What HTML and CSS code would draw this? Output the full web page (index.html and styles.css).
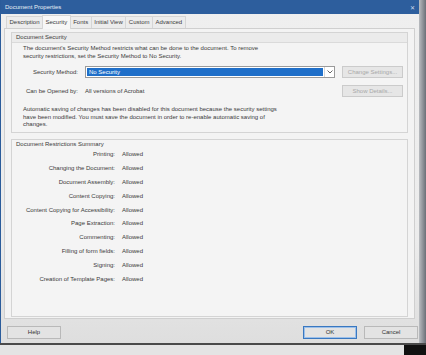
FILE: index.html
```html
<!DOCTYPE html>
<html lang="en">
<head>
    <meta charset="UTF-8">
    <title>Document Properties</title>
    <link rel="stylesheet" href="styles.css">
</head>
<body>
    <div class="screen">
        <div class="window">
            <div class="titlebar">
                <span>Document Properties</span>
                <span class="close">&#x2715;</span>
            </div>

            <div class="tabs">
                <div class="tab">Description</div>
                <div class="tab active">Security</div>
                <div class="tab">Fonts</div>
                <div class="tab">Initial View</div>
                <div class="tab">Custom</div>
                <div class="tab">Advanced</div>
            </div>

            <div class="panel">
                <div class="group security">
                    <div class="group-title">Document Security</div>
                    <p class="text">The document's Security Method restricts what can be done to the document. To remove<br>security restrictions, set the Security Method to No Security.</p>

                    <div class="field-row method-row">
                        <div class="field-label">Security Method:</div>
                        <div class="select">
                            <div class="select-value">No Security</div>
                            <div class="select-arrow">
                                <svg width="6" height="4" viewBox="0 0 6 4"><path d="M0.5 0.5 L3 3 L5.5 0.5" fill="none" stroke="#555" stroke-width="0.9"/></svg>
                            </div>
                        </div>
                        <div class="btn disabled">Change Settings...</div>
                    </div>

                    <div class="field-row opened-row">
                        <div class="field-label">Can be Opened by:</div>
                        <div class="field-value">All versions of Acrobat</div>
                        <div class="btn disabled">Show Details...</div>
                    </div>

                    <p class="text note">Automatic saving of changes has been disabled for this document because the security settings<br>have been modified. You must save the document in order to re-enable automatic saving of<br>changes.</p>
                </div>

                <div class="group summary">
                    <div class="group-title">Document Restrictions Summary</div>
                    <div class="rows">
                        <div class="row"><span class="key">Printing:</span><span>Allowed</span></div>
                        <div class="row"><span class="key">Changing the Document:</span><span>Allowed</span></div>
                        <div class="row"><span class="key">Document Assembly:</span><span>Allowed</span></div>
                        <div class="row"><span class="key">Content Copying:</span><span>Allowed</span></div>
                        <div class="row"><span class="key">Content Copying for Accessibility:</span><span>Allowed</span></div>
                        <div class="row"><span class="key">Page Extraction:</span><span>Allowed</span></div>
                        <div class="row"><span class="key">Commenting:</span><span>Allowed</span></div>
                        <div class="row"><span class="key">Filling of form fields:</span><span>Allowed</span></div>
                        <div class="row"><span class="key">Signing:</span><span>Allowed</span></div>
                        <div class="row"><span class="key">Creation of Template Pages:</span><span>Allowed</span></div>
                    </div>
                </div>
            </div>

            <div class="footer">
                <div class="btn help">Help</div>
                <div class="spacer"></div>
                <div class="btn ok">OK</div>
                <div class="btn">Cancel</div>
            </div>
        </div>
        <div class="side"></div>
    </div>
    <div class="bottom">
        <div class="bottom-fill"></div>
        <div class="bottom-block"></div>
    </div>
</body>
</html>
```

FILE: styles.css
```css
body {
    margin: 0;
    width: 426px;
    height: 355px;
    overflow: hidden;
    background: #dcdcdc;
    font-family: "Liberation Sans", Arial, sans-serif;
    font-size: 6px;
    color: #3a3a3a;
}
.screen {
    display: flex;
    height: 343px;
}
.window {
    width: 419px;
    display: flex;
    flex-direction: column;
    background: linear-gradient(#efefef 0%, #ececec 70%, #dedede 100%);
    border-left: 1px solid #2b5c9b;
    box-sizing: border-box;
}
.side {
    flex: 1;
    background: linear-gradient(90deg, #b9bcc0, #6b7078);
}
.titlebar {
    height: 14px;
    background: #2d5e9d;
    color: #e9eef6;
    display: flex;
    align-items: center;
    justify-content: space-between;
    padding: 0 4px 0 4px;
    font-size: 6px;
}
.close {
    font-size: 6px;
    color: #d0dcec;
}
.tabs {
    display: flex;
    align-items: flex-end;
    height: 14px;
    padding-left: 5px;
}
.tab {
    height: 11px;
    line-height: 11px;
    padding: 0 2.5px;
    border: 1px solid #d6d6d6;
    border-bottom: none;
    margin-right: -1px;
    background: #ececec;
    color: #3c3c3c;
}
.tab.active {
    height: 13px;
    line-height: 12px;
    background: #f7f7f7;
    position: relative;
    z-index: 1;
    margin-bottom: -1px;
}
.panel {
    margin: 0 4px 0 3px;
    height: 291px;
    border: 1px solid #cfcfcf;
    background: #f3f3f3;
    padding: 3px 6px 0 6px;
    display: flex;
    flex-direction: column;
    gap: 6px;
    box-sizing: border-box;
}
.group {
    border: 1px solid #d4d4d4;
    background: #f4f4f4;
}
.group-title {
    height: 9px;
    line-height: 9px;
    padding-left: 4px;
    background: #ebebeb;
    border-bottom: 1px solid #dadada;
}
.security {
    height: 101px;
    box-sizing: border-box;
}
.text {
    margin: 2px 0 0 11px;
    line-height: 7.6px;
}
.field-row {
    display: flex;
    align-items: center;
    height: 12px;
}
.method-row {
    margin-top: 6px;
}
.opened-row {
    margin-top: 7px;
}
.field-label {
    width: 66px;
    text-align: right;
    margin-right: 7px;
}
.select {
    width: 250px;
    height: 12px;
    display: flex;
    border: 1px solid #9a9a9a;
    background: #fff;
    box-sizing: border-box;
}
.select-value {
    flex: 1;
    margin: 1px;
    background: #1f6fc9;
    color: #fff;
    line-height: 8px;
    padding-left: 2px;
}
.select-arrow {
    width: 9px;
    display: flex;
    align-items: center;
    justify-content: center;
    border-left: 1px solid #d6d6d6;
}
.field-value {
    width: 250px;
}
.btn {
    width: 54px;
    height: 13px;
    line-height: 11px;
    text-align: center;
    border: 1px solid #b9b9b9;
    background: #e3e3e3;
    box-sizing: border-box;
    color: #333;
}
.field-row .btn {
    width: 61px;
    height: 12px;
    line-height: 10px;
    margin-left: 7px;
}
.btn.disabled {
    color: #a8a8a8;
    border-color: #cbcbcb;
    background: #e6e6e6;
}
.note {
    margin-top: 9px;
}
.summary {
    height: 178px;
    box-sizing: border-box;
}
.summary .group-title {
    background: none;
    border-bottom: none;
}
.rows {
    display: flex;
    flex-direction: column;
    margin-top: -2px;
}
.row {
    display: flex;
    height: 13.9px;
    align-items: center;
}
.key {
    width: 103px;
    text-align: right;
    margin-right: 7px;
}
.footer {
    display: flex;
    align-items: center;
    gap: 7px;
    padding: 7px 1px 0 6px;
}
.spacer {
    flex: 1;
}
.ok {
    border: 1px solid #3a78c0;
    box-shadow: inset 0 0 0 1px #9cc0ea;
}
.bottom {
    display: flex;
    height: 12px;
    border-top: 2px solid #4a4a4a;
}
.bottom-fill {
    flex: 1;
    background: #e4e4e4;
}
.bottom-block {
    width: 22px;
    background: #111;
}
```
